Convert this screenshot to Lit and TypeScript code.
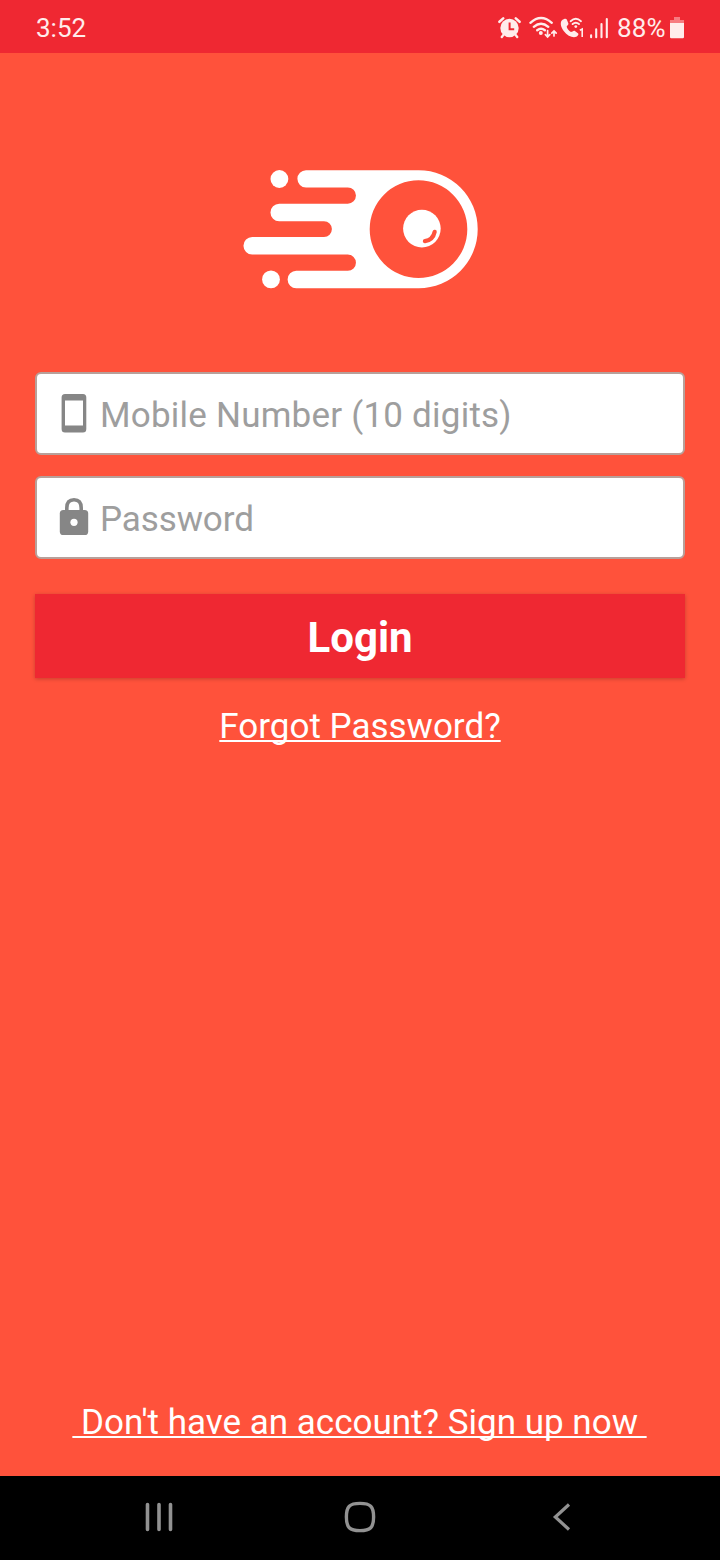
import { LitElement, html, css } from "lit";
import { customElement } from "lit/decorators.js";

@customElement("status-bar")
class StatusBar extends LitElement {
  static styles = css`
    :host { display: flex; justify-content: space-between; height: 53px; box-sizing: border-box; padding: 0 34px 0 36px; background: #ef2832; color: #ffeceb; font-size: 26px; line-height: 56px; }
    .right { display: flex; }
    .battery-text { width: 51px; white-space: nowrap; letter-spacing: 0.1px; }
    svg { display: block; flex: none; }
  `;
  render() {
    return html`
      <span>3:52</span>
      <div class="right">
        <svg width="119" height="53" viewBox="498 0 119 53" fill="none" stroke="#ffeceb" stroke-linecap="round">
          <circle cx="509.5" cy="28" r="9.2" fill="#ffeceb" stroke="none" />
          <path d="M499.4 21.8L503.2 18.4M519.6 21.8L515.8 18.4" stroke-width="2.5" />
          <path d="M503.6 34.6L501.8 37M515.4 34.6L517.2 37" stroke-width="2.4" />
          <path d="M509.6 22.5V29.2H514.2" stroke="#ef2832" stroke-width="2" stroke-linecap="butt" />
          <path d="M530.4 22.8Q541 13.2 551.8 22.8M533.8 26.8Q541 20.6 548.3 26.8M537.2 30.2Q541 27.2 544.9 30.2" stroke-width="2.4" />
          <circle cx="540.8" cy="33" r="2" fill="#ffeceb" stroke="none" />
          <path d="M547.6 30.6V36.6M545.4 34.7L547.6 37L549.8 34.7M554 36V31.5M551.8 33.2L554 30.9L556.2 33.2" stroke-width="1.7" />
          <path d="M562.3 20.1C560 22 560.2 26.3 563.7 31C567.6 36.2 573 38.3 576.3 36.8C578 35.8 578.9 34.2 578.2 33.4L574.6 30.8C573.3 30.2 572.3 32 571 32C568.9 31.2 566.8 28.2 566.7 26.6C567 25.4 568.7 25 568.4 23.5L566.8 19.5C566 18 563.7 18.8 562.3 20.1Z" fill="#ffeceb" stroke="none" />
          <path d="M570.6 21.2Q575.8 16.5 581 21.2M572.6 24.1Q575.8 21.4 579 24.1" stroke-width="1.9" />
          <circle cx="575.8" cy="26.6" r="1.4" fill="#ffeceb" stroke="none" />
          <path d="M579.8 30.2L582.2 29V37" stroke-width="1.6" stroke-linecap="butt" />
          <path d="M591.1 35.2V37.2M596.2 29.4V37.2M601.5 24V37.2M606.8 19V37.2" stroke-width="2.1" />
        </svg>
        <span class="battery-text">88%</span>
        <svg width="18" height="53" viewBox="668 0 18 53">
          <path d="M674 17h6v3h4v4h-14v-4h4z" fill="#f77b80" />
          <path d="M670 23h14v14q0 1.2-1.2 1.2h-11.6q-1.2 0-1.2-1.2z" fill="#ffeceb" />
        </svg>
      </div>
    `;
  }
}

@customElement("comet-logo")
class CometLogo extends LitElement {
  static styles = css`
    :host { display: block; width: 238px; height: 120px; }
    svg { display: block; }
  `;
  render() {
    return html`
      <svg width="238" height="120" viewBox="241 169 238 120" fill="#fff">
        <circle cx="279.4" cy="179" r="8.9" />
        <circle cx="271" cy="279.4" r="8.9" />
        <path fill-rule="evenodd" d="M306 170.2H418.7A59 59 0 0 1 418.7 288.2H296.3A8.7 8.7 0 0 1 296.3 270.8H347.8A8.15 8.15 0 0 0 347.8 254.5H252.2A8.75 8.75 0 0 1 252.2 237H324A7.9 7.9 0 0 0 324 221.2H279.2A8.75 8.75 0 0 1 279.2 203.7H347.8A8.15 8.15 0 0 0 347.8 187.4H306A8.6 8.6 0 0 1 306 170.2ZM369.7 229.2A48.8 48.8 0 1 0 467.3 229.2A48.8 48.8 0 1 0 369.7 229.2Z" />
        <circle cx="421.9" cy="228.6" r="18.8" />
        <path d="M434.7 231.8Q433 240 424.9 241.2" fill="none" stroke="#ff523b" stroke-width="4.2" stroke-linecap="round" />
      </svg>
    `;
  }
}

@customElement("nav-bar")
class NavBar extends LitElement {
  static styles = css`
    :host { display: flex; align-items: center; justify-content: space-between; height: 84px; box-sizing: border-box; padding: 0 142px 2px; background: #000; }
    svg { display: block; }
  `;
  render() {
    return html`
      <svg width="34" height="34" viewBox="142 1500 34 34" stroke="#929292" stroke-width="3.6" stroke-linecap="round">
        <path d="M147.5 1504.5V1529.5M159 1504.5V1529.5M170.5 1504.5V1529.5" />
      </svg>
      <svg width="34" height="34" viewBox="343 1500 34 34" fill="none" stroke="#929292" stroke-width="3.4">
        <path d="M360 1503.4C370.5 1503.4 373.6 1506.5 373.6 1517S370.5 1530.6 360 1530.6S346.4 1527.5 346.4 1517S349.5 1503.4 360 1503.4Z" />
      </svg>
      <svg width="34" height="34" viewBox="544 1500 34 34" fill="none" stroke="#929292" stroke-width="3.2">
        <path d="M569 1504.5L555.3 1517L569 1529.5" />
      </svg>
    `;
  }
}

@customElement("app-root")
class AppRoot extends LitElement {
  static styles = css`
    :host { display: flex; flex-direction: column; height: 1560px; overflow: hidden; background: #ff523b; color: #fff; font-family: Roboto, sans-serif; }
    main { flex: 1; display: flex; flex-direction: column; align-items: center; padding: 116px 35px 0; }
    .field { display: flex; align-items: center; width: 650px; height: 83px; box-sizing: border-box; border: 2px solid #b8a09a; border-radius: 6px; background: #fff; color: #9e9e9e; padding: 0 0 0 17px; font-size: 35px; line-height: 42px; }
    .field svg { display: block; flex: none; margin: 0 6px 2px 0; }
    .field span { padding-top: 4px; }
    .mobile { margin-top: 83px; letter-spacing: 0.22px; }
    .password { margin-top: 21px; letter-spacing: -0.1px; }
    .login { width: 650px; height: 84px; margin-top: 35px; background: #ef2832; text-align: center; font-size: 42px; font-weight: 700; line-height: 88px; box-shadow: 0 1px 4px rgba(0, 0, 0, 0.22); }
    .link { white-space: pre; font-size: 35px; line-height: 42px; text-decoration: underline; text-decoration-skip-ink: none; text-decoration-thickness: 2px; text-underline-offset: 2px; }
    .forgot { margin-top: 28px; }
    .signup { margin-top: auto; margin-bottom: 32px; padding-right: 1px; }
  `;
  render() {
    return html`
      <status-bar></status-bar>
      <main>
        <comet-logo></comet-logo>
        <div class="field mobile">
          <svg width="40" height="44" viewBox="54 391 40 44">
            <path fill="#868686" fill-rule="evenodd" d="M65 394H83Q86.3 394 86.3 397.5V429Q86.3 432.5 83 432.5H65Q61.6 432.5 61.6 429V397.5Q61.6 394 65 394ZM65 400.5V425.5H83V400.5Z" />
          </svg>
          <span>Mobile Number (10 digits)</span>
        </div>
        <div class="field password">
          <svg width="40" height="44" viewBox="54 495 40 44">
            <path d="M66.8 512V508Q66.8 499.8 74 499.8T81.2 508V512" fill="none" stroke="#868686" stroke-width="3.6" />
            <rect x="59.8" y="510" width="28.4" height="25" rx="3.6" fill="#868686" />
            <circle cx="74" cy="522.3" r="3.6" fill="#fff" />
          </svg>
          <span>Password</span>
        </div>
        <div class="login">Login</div>
        <div class="link forgot">Forgot Password?</div>
        <div class="link signup"> Don't have an account? Sign up now </div>
      </main>
      <nav-bar></nav-bar>
    `;
  }
}
